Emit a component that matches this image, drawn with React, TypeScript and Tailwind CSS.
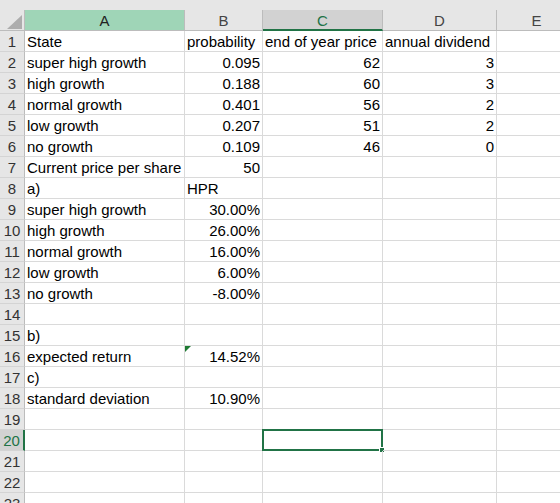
const cols = [
    { key: "A", w: "w-[160px]" },
    { key: "B", w: "w-[78px]" },
    { key: "C", w: "w-[120px]" },
    { key: "D", w: "w-[114px]" },
    { key: "E", w: "w-[80px]" },
];

type Cell = { v: string; right?: boolean };

// row data: [A, B, C, D]
const rows: Cell[][] = [
    [{ v: "State" }, { v: "probability" }, { v: "end of year price" }, { v: "annual dividend" }],
    [{ v: "super high growth" }, { v: "0.095", right: true }, { v: "62", right: true }, { v: "3", right: true }],
    [{ v: "high growth" }, { v: "0.188", right: true }, { v: "60", right: true }, { v: "3", right: true }],
    [{ v: "normal growth" }, { v: "0.401", right: true }, { v: "56", right: true }, { v: "2", right: true }],
    [{ v: "low growth" }, { v: "0.207", right: true }, { v: "51", right: true }, { v: "2", right: true }],
    [{ v: "no growth" }, { v: "0.109", right: true }, { v: "46", right: true }, { v: "0", right: true }],
    [{ v: "Current price per share" }, { v: "50", right: true }],
    [{ v: "a)" }, { v: "HPR" }],
    [{ v: "super high growth" }, { v: "30.00%", right: true }],
    [{ v: "high growth" }, { v: "26.00%", right: true }],
    [{ v: "normal growth" }, { v: "16.00%", right: true }],
    [{ v: "low growth" }, { v: "6.00%", right: true }],
    [{ v: "no growth" }, { v: "-8.00%", right: true }],
    [],
    [{ v: "b)" }],
    [{ v: "expected return" }, { v: "14.52%", right: true }],
    [{ v: "c)" }],
    [{ v: "standard deviation" }, { v: "10.90%", right: true }],
    [],
    [],
    [],
    [],
    [],
];

export default function App() {
    return (
        <main
            className="h-[503px] w-[560px] overflow-hidden bg-white text-[15px] leading-none text-black"
            style={{ fontFamily: '"Liberation Sans", Arial, sans-serif' }}
        >
            <div className="h-[10px] bg-[#e6e6e6]" />

            {/* column headers */}
            <div className="flex h-[21px]">
                <div className="flex w-[25px] shrink-0 items-end justify-end border-r border-b border-[#bcbcbc] bg-[#e6e6e6] pr-[2px] pb-[1px]">
                    <div className="h-[14px] w-[15px] shrink-0 bg-[#adadad] [clip-path:polygon(100%_0,100%_100%,0_100%)]" />
                </div>
                {cols.map((c) => (
                    <div
                        key={c.key}
                        className={`${c.w} flex shrink-0 items-center justify-center border-r pt-[1px] ${
                            c.key === "A"
                                ? "border-b border-[#bcbcbc] bg-[#9fd5b7] text-[#222]"
                                : c.key === "C"
                                  ? "border-r-[#bcbcbc] border-b-2 border-b-[#217346] bg-[#d2d2d2] text-[#217346]"
                                  : "border-b border-[#bcbcbc] bg-[#e6e6e6] text-[#444]"
                        }`}
                    >
                        {c.key}
                    </div>
                ))}
            </div>

            {rows.map((r, i) => {
                const n = i + 1;
                const sel = n === 20;
                return (
                    <div key={n} className="flex h-[21px]">
                        <div
                            className={`flex w-[25px] shrink-0 items-center justify-center border-b border-[#d4d4d4] pt-[1px] ${
                                sel
                                    ? "border-r-2 border-r-[#217346] bg-[#d2d2d2] text-[#217346]"
                                    : "border-r border-r-[#bcbcbc] bg-[#e6e6e6] text-[#333]"
                            }`}
                        >
                            {n}
                        </div>
                        {cols.map((c, j) => {
                            const cell = r[j];
                            return (
                                <div
                                    key={c.key}
                                    className={`${c.w} relative flex shrink-0 items-center whitespace-nowrap border-r border-b border-[#dadada] px-[2px] pt-[1px] ${
                                        cell?.right ? "justify-end" : "justify-start"
                                    }`}
                                >
                                    {n === 16 && c.key === "B" && (
                                        <div className="absolute top-0 left-0 h-0 w-0 border-t-[6px] border-r-[6px] border-t-[#1e7a32] border-r-transparent" />
                                    )}
                                    {sel && c.key === "C" && (
                                        <div className="absolute -top-[1px] -left-[1px] h-[22px] w-[121px] border-2 border-[#217346]">
                                            <div className="absolute -right-[4px] -bottom-[4px] h-[6px] w-[6px] border border-white bg-[#217346]" />
                                        </div>
                                    )}
                                    {cell?.v}
                                </div>
                            );
                        })}
                    </div>
                );
            })}
        </main>
    );
}
